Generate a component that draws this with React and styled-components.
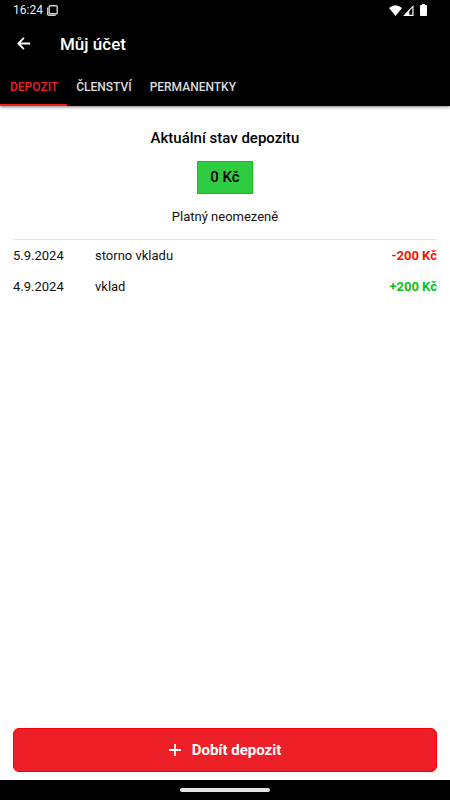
import React, { useState } from 'react';
import styled, { createGlobalStyle } from 'styled-components';

const tabs = ['Depozit', 'Členství', 'Permanentky'];

const transactions = [
    { date: '5.9.2024', label: 'storno vkladu', amount: -200 },
    { date: '4.9.2024', label: 'vklad', amount: 200 },
];

const formatAmount = (amount) => `${amount > 0 ? '+' : ''}${amount} Kč`;

function StatusBar() {
    return (
        <Status>
            <span>16:24</span>
            <svg width="11" height="11" viewBox="0 0 11 11" fill="none" stroke="#ccc">
                <rect x="2.2" y="0.7" width="8" height="8" rx="0.8" strokeWidth="1.4" />
                <path d="M0.7 2.4V9.3q0 1 1 1h7" strokeWidth="1.4" />
            </svg>
            <StatusIcons>
                <svg width="13" height="11" viewBox="0 0 13 11" fill="#fff">
                    <path d="M0 3Q6.5-2.6 13 3L6.5 11z" />
                </svg>
                <svg width="11" height="11" viewBox="0 0 11 11">
                    <path d="M0 11L10.5 0v11z" fill="#fff" />
                    <path d="M6 6.2L9.3 2.8v7H6z" fill="#000" />
                    <path d="M6 5v5" stroke="#fff" strokeWidth="0.6" />
                </svg>
                <svg width="7" height="12" viewBox="0 0 7 12" fill="#fff">
                    <path d="M2 0h3v1h1q1 0 1 1v9q0 1-1 1H1q-1 0-1-1V2q0-1 1-1h1z" />
                </svg>
            </StatusIcons>
        </Status>
    );
}

function App() {
    const [active, setActive] = useState(0);

    return (
        <Screen>
            <GlobalStyle />
            <Header>
                <StatusBar />
                <TitleBar>
                    <BackButton type="button" aria-label="Zpět">
                        <svg width="14" height="14" viewBox="0 0 14 14" fill="none" stroke="#fff" strokeWidth="1.8">
                            <path d="M13.2 6.5H1.3M6.9 0.9L1.3 6.5l5.6 5.6" />
                        </svg>
                    </BackButton>
                    <h1>Můj účet</h1>
                </TitleBar>
                <Tabs role="tablist">
                    {tabs.map((tab, id) => (
                        <Tab
                            key={tab}
                            type="button"
                            role="tab"
                            aria-selected={active === id}
                            $active={active === id}
                            onClick={() => setActive(id)}
                        >
                            {tab}
                        </Tab>
                    ))}
                </Tabs>
            </Header>
            <Content>
                <Balance>
                    <h2>Aktuální stav depozitu</h2>
                    <Amount>0 Kč</Amount>
                    <p>Platný neomezeně</p>
                </Balance>
                <History>
                    <tbody>
                        {transactions.map((item) => (
                            <tr key={item.date}>
                                <DateCell>{item.date}</DateCell>
                                <td>{item.label}</td>
                                <AmountCell $positive={item.amount > 0}>{formatAmount(item.amount)}</AmountCell>
                            </tr>
                        ))}
                    </tbody>
                </History>
            </Content>
            <Footer>
                <TopUpButton type="button">
                    <svg width="12" height="12" viewBox="0 0 12 12" stroke="#fff" strokeWidth="1.8">
                        <path d="M6 0v12M0 6h12" />
                    </svg>
                    Dobít depozit
                </TopUpButton>
            </Footer>
            <NavBar>
                <NavHandle />
            </NavBar>
        </Screen>
    );
}

const GlobalStyle = createGlobalStyle`
    * {
        box-sizing: border-box;
    }

    body {
        margin: 0;
        background: #fff;
        color: #111;
        font-family: Roboto, sans-serif;
        font-size: 13px;
    }

    h1, h2, p {
        margin: 0;
    }

    button {
        font-family: inherit;
        border: 0;
        cursor: pointer;
    }

    svg {
        display: block;
        flex: none;
    }
`;

const Screen = styled.div`
    display: flex;
    flex-direction: column;
    min-height: 100vh;
`;

const Header = styled.header`
    background: #000;
    color: #fff;
    box-shadow: 0 1px 3px rgb(0 0 0 / 0.5);
`;

const Status = styled.div`
    display: flex;
    align-items: center;
    gap: 4px;
    height: 20px;
    padding: 0 23px 0 13px;
    font-size: 12px;
    color: #eee;
`;

const StatusIcons = styled.div`
    display: flex;
    align-items: center;
    gap: 1px;
    margin-left: auto;

    svg:last-child {
        margin-left: 5px;
    }
`;

const TitleBar = styled.div`
    display: flex;
    align-items: center;
    height: 48px;
    padding: 0 12px;

    h1 {
        margin-left: 24px;
        font-size: 17px;
        font-weight: 500;
    }
`;

const BackButton = styled.button`
    display: flex;
    padding: 5px;
    background: none;
`;

const Tabs = styled.div`
    display: flex;
    height: 38px;
`;

const Tab = styled.button`
    padding: 2px 9px 0;
    background: none;
    border-bottom: 2px solid ${({ $active }) => ($active ? '#ed2027' : 'transparent')};
    color: ${({ $active }) => ($active ? '#ed2027' : '#ddd')};
    font-size: 12px;
    font-weight: 500;
    text-transform: uppercase;

    &:first-child {
        padding-left: 10px;
    }
`;

const Content = styled.main`
    flex: 1;
    padding: 0 13px;
`;

const Balance = styled.section`
    display: flex;
    flex-direction: column;
    align-items: center;
    padding: 22px 0 12px;
    border-bottom: 1px solid #e4e4e4;

    h2 {
        font-size: 15px;
        line-height: 20px;
        font-weight: 500;
        color: #000;
    }

    p {
        line-height: 20px;
    }
`;

const Amount = styled.strong`
    margin: 13px 0;
    padding: 0 12px;
    border: 1px solid #0fc01c;
    background: #2ecc40;
    color: #000;
    font-size: 15px;
    font-weight: 500;
    line-height: 31px;
`;

const History = styled.table`
    width: 100%;
    border-collapse: collapse;

    td {
        height: 31px;
        padding: 0;
    }
`;

const DateCell = styled.td`
    width: 82px;
`;

const AmountCell = styled.td`
    color: ${({ $positive }) => ($positive ? '#0fc01c' : '#f5140a')};
    font-weight: 700;
    text-align: right;
`;

const Footer = styled.footer`
    padding: 8px 13px;
`;

const TopUpButton = styled.button`
    display: flex;
    align-items: center;
    justify-content: center;
    gap: 11px;
    width: 100%;
    height: 44px;
    border: 1px solid #f00008;
    border-radius: 6px;
    background: #ed2027;
    color: #fff;
    font-size: 15px;
    font-weight: 700;
`;

const NavBar = styled.div`
    display: flex;
    align-items: center;
    justify-content: center;
    height: 20px;
    background: #000;
`;

const NavHandle = styled.div`
    width: 20%;
    height: 4px;
    border-radius: 2px;
    background: #e4e4e4;
`;

export default App;
